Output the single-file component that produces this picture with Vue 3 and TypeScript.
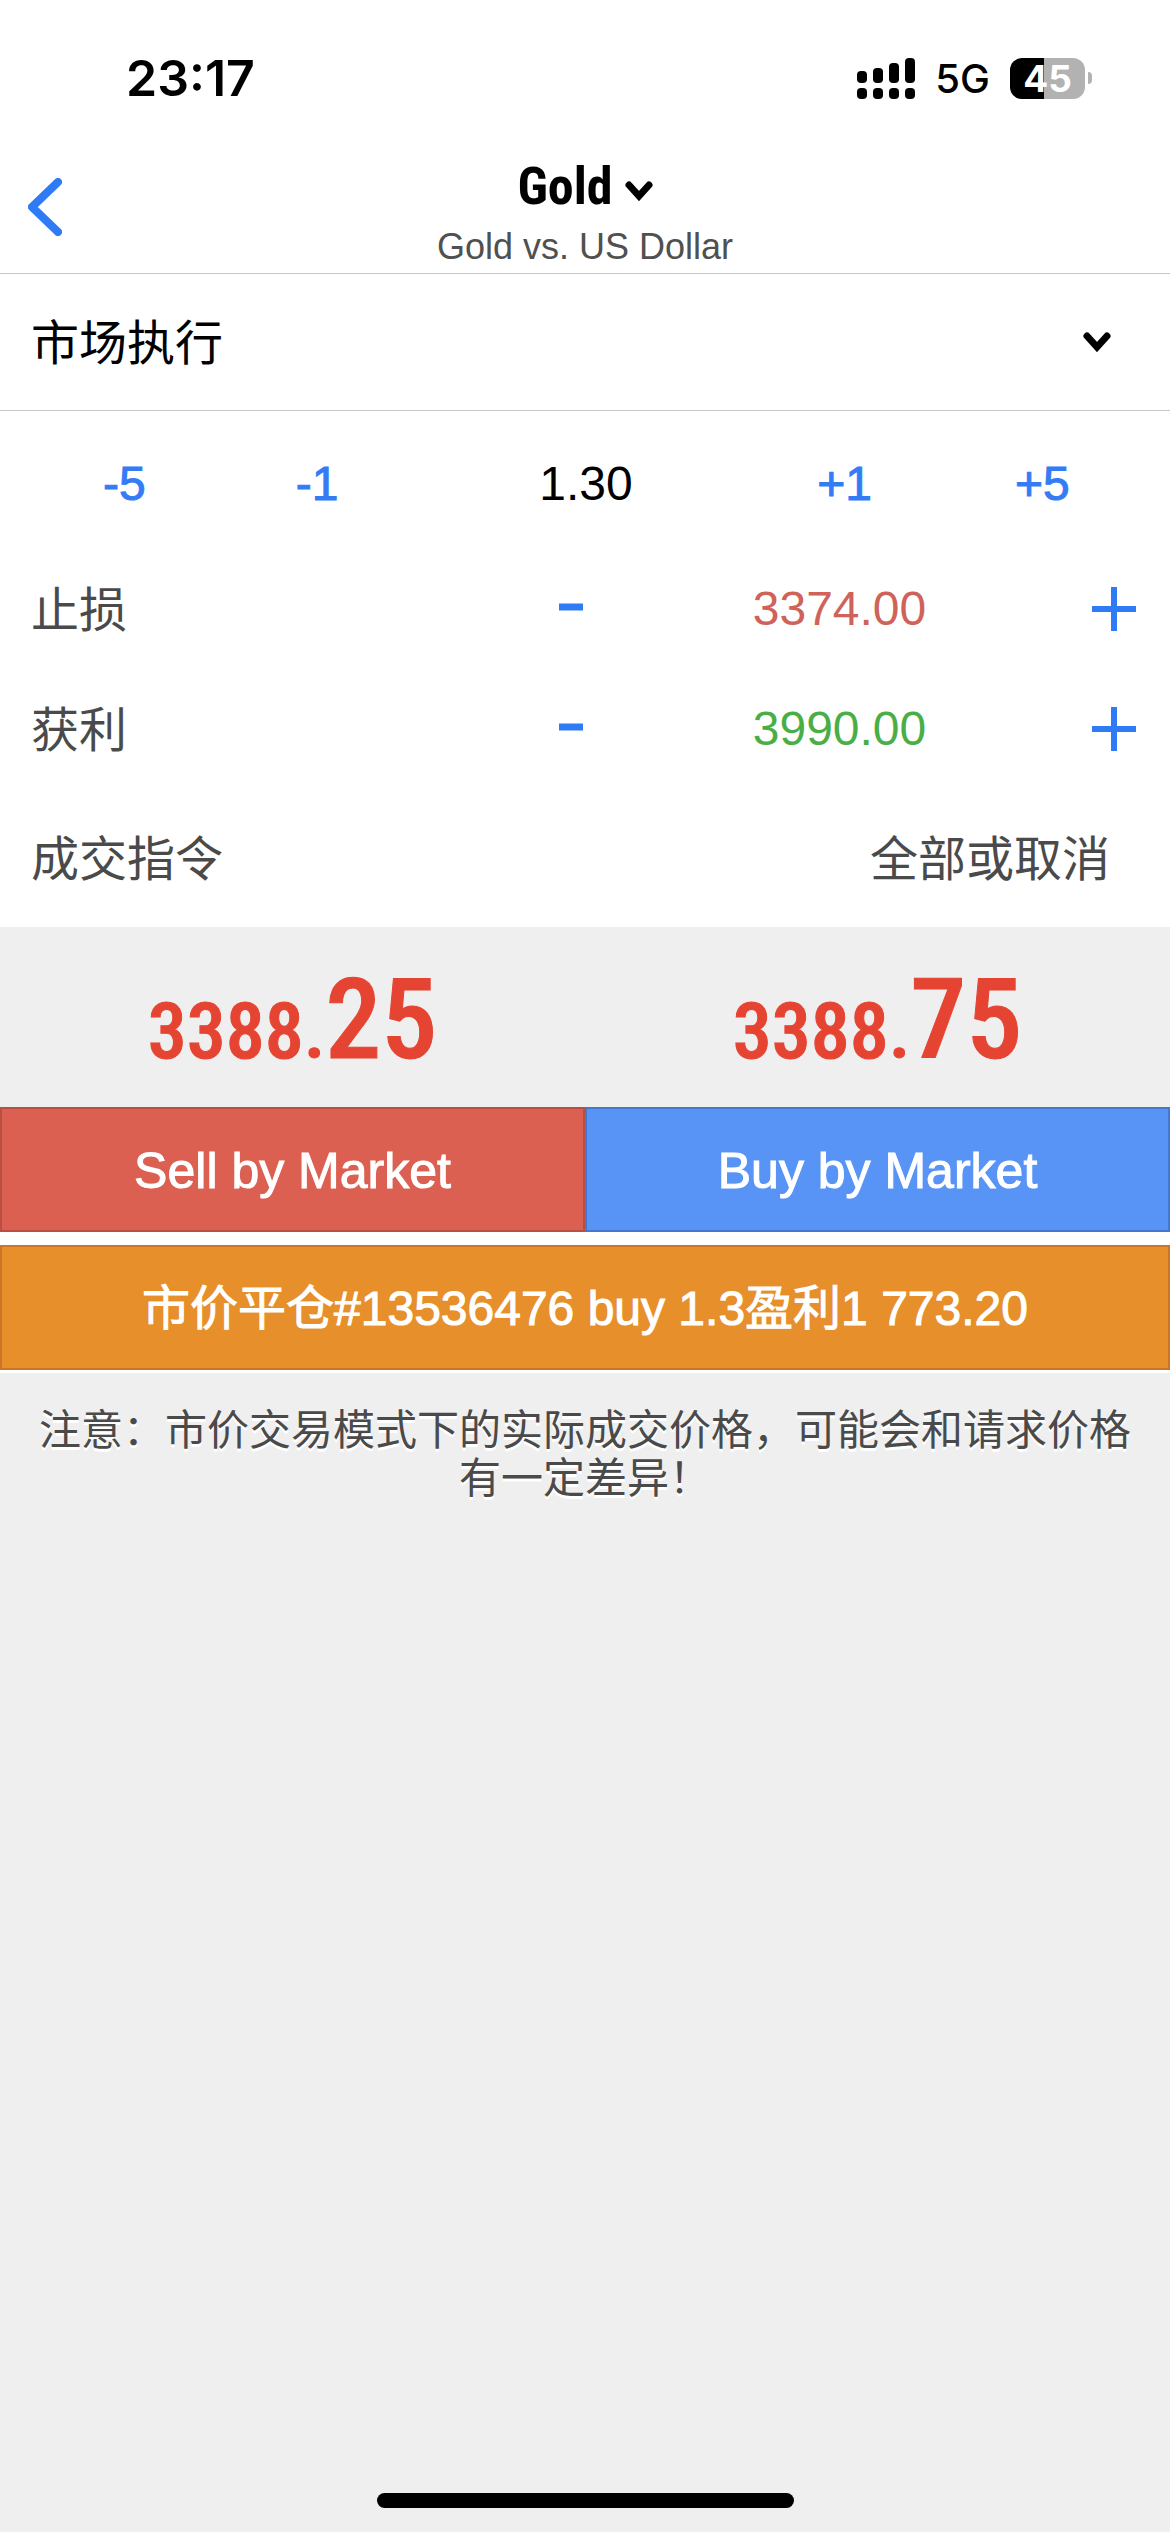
<script setup lang="ts">
import { ref } from 'vue'

interface Level {
  id: string
  label: string
  value: string
  tone: string
}

interface Quote {
  id: string
  whole: string
  pips: string
}

const volume = ref('1.30')
const execution = ref('市场执行')
const filling = ref('全部或取消')

const decrements = ['-5', '-1']
const increments = ['+1', '+5']

const levels = ref<Level[]>([
  { id: 'stop-loss', label: '止损', value: '3374.00', tone: 'loss' },
  { id: 'take-profit', label: '获利', value: '3990.00', tone: 'gain' },
])

const quotes: Quote[] = [
  { id: 'bid', whole: '3388.', pips: '25' },
  { id: 'ask', whole: '3388.', pips: '75' },
]

function changeVolume(step: string) {
  volume.value = Math.max(0, Number(volume.value) + Number(step)).toFixed(2)
}

function changeLevel(level: Level, step: number) {
  level.value = (Number(level.value) + step).toFixed(2)
}
</script>

<template>
  <main class="screen" lang="zh-CN">
    <div class="status">
      <span class="clock">23:17</span>
      <div class="indicators">
        <svg class="signal" viewBox="0 0 58 41" aria-hidden="true">
          <rect x="0" y="13" width="10" height="12" rx="4" />
          <rect x="16" y="10" width="10" height="15" rx="4" />
          <rect x="32" y="5" width="10" height="20" rx="4" />
          <rect x="48" y="0" width="10" height="25" rx="4" />
          <rect x="0" y="30" width="10" height="11" rx="4" />
          <rect x="16" y="30" width="10" height="11" rx="4" />
          <rect x="32" y="30" width="10" height="11" rx="4" />
          <rect x="48" y="30" width="10" height="11" rx="4" />
        </svg>
        <span class="network">5G</span>
        <div class="battery">
          <span class="charge">45</span>
          <span class="nub"></span>
        </div>
      </div>
    </div>

    <header class="nav">
      <button class="back" type="button" aria-label="返回">
        <svg viewBox="0 0 34 58" aria-hidden="true">
          <path d="M30 4 4 29l26 25" />
        </svg>
      </button>
      <div class="heading">
        <button class="symbol" type="button">
          <span>Gold</span>
          <svg class="chevron" viewBox="0 0 28 20" aria-hidden="true">
            <path d="M4 4l10 11L24 4" />
          </svg>
        </button>
        <p class="description">Gold vs. US Dollar</p>
      </div>
    </header>

    <form class="order" @submit.prevent>
      <div class="mode">
        <select v-model="execution" aria-label="交易类型">
          <option>市场执行</option>
        </select>
        <svg class="chevron" viewBox="0 0 28 20" aria-hidden="true">
          <path d="M4 4l10 11L24 4" />
        </svg>
      </div>

      <div class="volume">
        <button v-for="step in decrements" :key="step" type="button" @click="changeVolume(step)">{{ step }}</button>
        <input v-model="volume" type="text" inputmode="decimal" aria-label="交易量" />
        <button v-for="step in increments" :key="step" type="button" @click="changeVolume(step)">{{ step }}</button>
      </div>

      <div v-for="level in levels" :key="level.id" class="level">
        <label :for="level.id">{{ level.label }}</label>
        <button type="button" aria-label="减少" @click="changeLevel(level, -1)">
          <svg class="minus" viewBox="0 0 24 12" aria-hidden="true"><path d="M0 4h24" /></svg>
        </button>
        <input :id="level.id" v-model="level.value" :class="level.tone" type="text" inputmode="decimal" />
        <button type="button" aria-label="增加" @click="changeLevel(level, 1)">
          <svg class="plus" viewBox="0 0 44 44" aria-hidden="true"><path d="M22 0v44M0 22h44" /></svg>
        </button>
      </div>

      <div class="filling">
        <label for="filling">成交指令</label>
        <select id="filling" v-model="filling">
          <option>全部或取消</option>
        </select>
      </div>
    </form>

    <section class="quotes">
      <p v-for="quote in quotes" :key="quote.id" class="quote">
        {{ quote.whole }}<span class="pips">{{ quote.pips }}</span>
      </p>
    </section>

    <section class="actions">
      <div class="deals">
        <button class="sell" type="button">Sell by Market</button>
        <button class="buy" type="button">Buy by Market</button>
      </div>
      <button class="close" type="button">市价平仓#13536476 buy 1.3盈利1 773.20</button>
    </section>

    <p class="note">注意：市价交易模式下的实际成交价格，可能会和请求价格有一定差异！</p>

    <div class="home"></div>
  </main>
</template>

<style>
body {
  margin: 0;
  background: #efefef;
}
</style>

<style scoped>
.screen {
  box-sizing: border-box;
  display: flex;
  flex-direction: column;
  min-height: 100vh;
  background: #efefef;
  color: #000;
  font-family: "Liberation Sans", "Noto Sans CJK SC", sans-serif;
  font-size: 48px;
  line-height: 56px;
}

button,
input,
select {
  box-sizing: border-box;
  margin: 0;
  padding: 0;
  border: 0;
  border-radius: 0;
  background: none;
  color: inherit;
  font: inherit;
  appearance: none;
}

p {
  margin: 0;
}

svg {
  display: block;
  fill: none;
}

/* Status bar */
.status {
  display: flex;
  align-items: center;
  justify-content: space-between;
  height: 156px;
  padding: 0 78px 0 126px;
  background: #fff;
  font-family: Inter, sans-serif;
}

.clock {
  font-size: 50px;
  font-weight: 600;
}

.indicators {
  display: flex;
  align-items: center;
  gap: 20px;
}

.signal {
  width: 58px;
  height: 41px;
  fill: #000;
}

.network {
  padding-top: 2px;
  font-size: 40px;
  font-weight: 500;
}

.battery {
  display: flex;
  align-items: center;
  gap: 3px;
}

.charge {
  width: 75px;
  border-radius: 12px;
  background: linear-gradient(to right, #000 45%, #b2b2b2 45%);
  color: #fff;
  font-size: 37px;
  font-weight: 700;
  line-height: 41px;
  text-align: center;
}

.nub {
  width: 4px;
  height: 12px;
  border-radius: 0 4px 4px 0;
  background: #b2b2b2;
}

/* Navigation */
.nav {
  display: grid;
  grid-template-columns: 120px 1fr 120px;
  height: 118px;
  box-sizing: border-box;
  border-bottom: 1px solid #c8c8c8;
  background: #fff;
}

.back {
  display: flex;
  align-items: center;
  height: 102px;
  padding-left: 28px;
}

.back svg {
  width: 34px;
  height: 58px;
  stroke: #2f7bf6;
  stroke-width: 8;
  stroke-linecap: round;
  stroke-linejoin: round;
}

.heading {
  display: flex;
  flex-direction: column;
  align-items: center;
  gap: 9px;
}

.symbol {
  display: flex;
  align-items: center;
  gap: 12px;
  height: 62px;
  font-family: "Roboto Condensed", "Noto Sans Mono CJK SC", sans-serif;
  font-size: 52px;
  font-weight: 700;
}

.chevron {
  width: 28px;
  height: 20px;
  stroke: #000;
  stroke-width: 7;
  stroke-linecap: round;
}

.symbol .chevron {
  margin-top: 8px;
}

.description {
  color: #505050;
  font-size: 36px;
  line-height: 40px;
}

/* Order form */
.order {
  background: #fff;
}

.order label,
.order select {
  padding-top: 4px;
}

.mode {
  display: grid;
  align-items: center;
  height: 137px;
  box-sizing: border-box;
  border-bottom: 1px solid #c8c8c8;
}

.mode select,
.mode .chevron {
  grid-area: 1 / 1;
}

.mode select {
  height: 100%;
  padding-left: 31px;
}

.mode .chevron {
  justify-self: end;
  margin-right: 59px;
  pointer-events: none;
}

.volume {
  display: grid;
  grid-template-columns: 19fr 19fr 34fr 17fr 22fr;
  height: 138px;
  box-sizing: border-box;
  padding: 8px 16px 0 28px;
}

.volume button {
  color: #347bf6;
  -webkit-text-stroke: 1px #347bf6;
}

.volume input,
.level input {
  width: 100%;
  text-align: center;
}

.level {
  display: grid;
  grid-template-columns: 490px 100px 1fr 112px;
  align-items: center;
  height: 120px;
  padding: 0 0 0 31px;
}

.level label,
.filling {
  color: #4a4a4a;
}

.level button {
  display: grid;
  place-items: center;
  height: 100%;
}

.level svg {
  stroke: #2f7bf6;
}

.minus {
  width: 24px;
  height: 12px;
  stroke-width: 7;
}

.plus {
  width: 44px;
  height: 44px;
  stroke-width: 6;
}

.loss {
  color: #cf6259;
}

.gain {
  color: #4aae46;
}

.filling {
  display: flex;
  align-items: center;
  justify-content: space-between;
  height: 138px;
  padding: 0 59px 0 31px;
}

/* Quotes */
.quotes {
  display: grid;
  grid-template-columns: 1fr 1fr;
  height: 180px;
  box-sizing: border-box;
  padding-top: 30px;
}

.quote {
  color: #e64432;
  font-family: "Roboto Condensed", "Noto Sans Mono CJK SC", sans-serif;
  font-size: 78px;
  font-weight: 500;
  line-height: 150px;
  text-align: center;
  -webkit-text-stroke: 1px #e64432;
}

.pips {
  font-size: 112px;
  line-height: 112px;
}

/* Actions */
.actions {
  display: grid;
  gap: 13px;
  padding-bottom: 3px;
  background: #fff;
}

.deals {
  display: grid;
  grid-template-columns: 1fr 1fr;
  font-size: 50px;
}

.actions button {
  height: 125px;
  padding-top: 2px;
  border: 2px solid;
  color: #fff;
  -webkit-text-stroke: 1px #fff;
}

.actions .sell {
  border-color: #b94f43;
  background: #dc6051;
}

.actions .buy {
  border-color: #4478cf;
  background: #5894f6;
}

.actions .close {
  border-color: #c97726;
  background: #e68f2b;
}

.note {
  padding: 34px 30px 0;
  color: #4a4a4a;
  font-size: 42px;
  line-height: 48px;
  text-align: center;
  text-shadow: 0 3px 0 #fff;
}

.home {
  align-self: center;
  width: 417px;
  height: 15px;
  margin: auto 0 24px;
  border-radius: 8px;
  background: #000;
}
</style>
